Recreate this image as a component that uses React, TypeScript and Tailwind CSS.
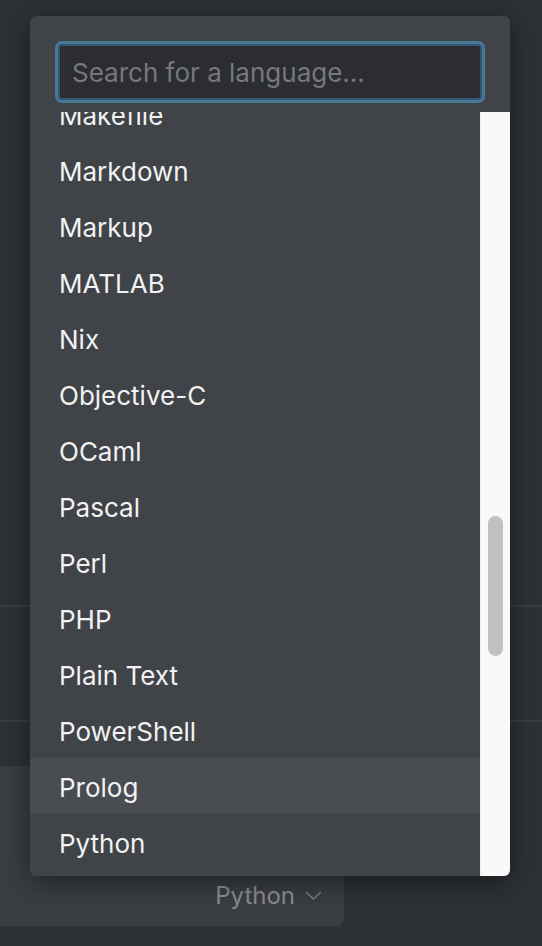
import React from 'react';

const languages = [
  'Makefile',
  'Markdown',
  'Markup',
  'MATLAB',
  'Nix',
  'Objective-C',
  'OCaml',
  'Pascal',
  'Perl',
  'PHP',
  'Plain Text',
  'PowerShell',
  'Prolog',
  'Python',
  'R',
];

export default function App() {
  return (
    <div
      className="relative h-[946px] w-[542px] overflow-hidden bg-[#2d3135]"
      style={{ fontFamily: 'Inter, "Liberation Sans", sans-serif' }}
    >
      {/* background page behind the menu */}
      <div className="flex flex-col">
        <div className="h-[605px]" />
        <div className="h-[2px] bg-[#3a3e42]" />
        <div className="h-[113px]" />
        <div className="h-[2px] bg-[#3a3e42]" />
        <div className="h-[44px]" />
        <div className="flex h-[160px] w-[344px] items-end justify-end rounded-br-lg bg-[#3a3d41] pb-[15px] pr-[22px]">
          <span className="text-[24px] leading-[30px] text-[#8b8d90]">Python</span>
          <svg width="17" height="30" viewBox="0 0 17 30" className="ml-[10px]">
            <polyline
              points="1,11 8.5,18 16,11"
              fill="none"
              stroke="#7d7f82"
              strokeWidth="1.6"
            />
          </svg>
        </div>
      </div>

      {/* language picker */}
      <div className="absolute left-[30px] top-[16px] flex h-[860px] w-[480px] flex-col overflow-hidden rounded-md bg-[#404347] shadow-[0_6px_28px_rgba(0,0,0,0.45)]">
        <div className="px-[28px] pb-[12px] pt-[28px]">
          <input
            className="h-[56px] w-full rounded-[4px] border-2 border-[#33566e] bg-[#2b2d31] pl-[12px] text-[26px] text-white outline-none ring-[3px] ring-[#4a7898] placeholder:text-[#76787c]"
            placeholder="Search for a language..."
          />
        </div>
        <div className="flex min-h-0 flex-1">
          <div className="flex-1 overflow-hidden">
            <div className="-mt-[26px]">
              {languages.map((lang) => (
                <div
                  key={lang}
                  className={
                    'flex h-[56px] items-center pl-[29px] pt-[2px] text-[26px] text-[#f2f2f2] ' +
                    (lang === 'Prolog' ? 'bg-[#494c51]' : '')
                  }
                >
                  {lang}
                </div>
              ))}
            </div>
          </div>
          <div className="w-[30px] border-l border-[#ececec] bg-[#f9f9f9] pl-[7px] pt-[404px]">
            <div className="h-[140px] w-[15px] rounded-full bg-[#c1c1c1]" />
          </div>
        </div>
      </div>
    </div>
  );
}
